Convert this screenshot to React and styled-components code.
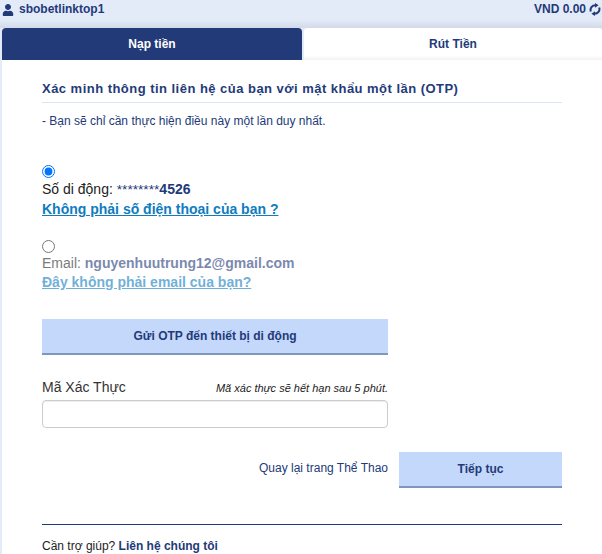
import React from 'react';
import styled, { createGlobalStyle } from 'styled-components';
import { FaUser } from 'react-icons/fa';

const GlobalStyle = createGlobalStyle`
  html, body {
    margin: 0;
    padding: 0;
    background: #e4ebf8;
    font-family: "Liberation Sans", Arial, sans-serif;
  }
`;

const Page = styled.div`
  width: 602px;
  height: 554px;
  overflow: hidden;
  background: #e4ebf8;
`;

const TopBar = styled.div`
  height: 28px;
  padding: 3px 1px 0 2px;
  box-sizing: border-box;
  display: flex;
  align-items: flex-start;
  justify-content: space-between;
  background: linear-gradient(#e4ebf8 0, #e4ebf8 20px, #d3dae7 28px);
  color: #233a79;
  font-size: 12px;
  line-height: 13px;
  font-weight: 700;
`;

const UserName = styled.div`
  display: flex;
  align-items: center;
  gap: 5px;
`;

const Balance = styled.div`
  display: flex;
  align-items: center;
  gap: 3px;
`;

const Tabs = styled.div`
  display: flex;
  padding-left: 2px;
  height: 32px;
  background: #e4ebf8;
`;

const Tab = styled.div`
  width: ${(p) => (p.$active ? '300px' : '298px')};
  display: flex;
  align-items: center;
  justify-content: center;
  border-radius: 4px 4px 0 0;
  font-size: 12px;
  font-weight: 700;
  background: ${(p) => (p.$active ? '#233a79' : 'linear-gradient(#fff 0, #fff 27px, #f3f3f3 32px)')};
  color: ${(p) => (p.$active ? '#ffffff' : '#233a79')};
  margin-left: ${(p) => (p.$active ? '0' : '2px')};
`;

const Panel = styled.div`
  margin-left: 2px;
  height: 494px;
  box-sizing: border-box;
  background: #fff;
  padding: 20px 40px 0;
  color: #233a79;
`;

const Title = styled.div`
  height: 22px;
  border-bottom: 1px solid #dbe5f6;
  font-size: 13px;
  font-weight: 700;
  line-height: 18px;
  letter-spacing: 0.47px;
`;

const Note = styled.div`
  margin-top: 10px;
  font-size: 12px;
  line-height: 16px;
`;

const Option = styled.div`
  display: flex;
  flex-direction: column;
  align-items: flex-start;
  margin-top: ${(p) => p.$top}px;
`;

const Radio = styled.input.attrs({ type: 'radio', readOnly: true })`
  width: 13px;
  height: 13px;
  margin: 0;
  accent-color: #0075ff;
`;

const ContactLine = styled.div`
  margin-top: ${(p) => (p.$dim ? '1px' : '2px')};
  font-size: 14px;
  line-height: 18px;
  color: #222;
  opacity: ${(p) => (p.$dim ? 0.6 : 1)};
`;

const Stars = styled.span`
  color: #233a79;
  font-size: 13.7px;
`;

const Strong = styled.b`
  color: #233a79;
  font-size: 14px;
`;

const NotYours = styled.a`
  margin-top: 1px;
  font-size: 14px;
  line-height: 19px;
  font-weight: 700;
  color: #0f7cc0;
  text-decoration: underline;
  opacity: ${(p) => (p.$dim ? 0.6 : 1)};
`;

const SendButton = styled.button`
  display: block;
  width: 346px;
  height: 36px;
  margin-top: 27px;
  border: 0;
  border-bottom: 2px solid #7f97bc;
  padding: 0;
  background: #c3d8fa;
  color: #233a79;
  font: 700 12px "Liberation Sans", Arial, sans-serif;
`;

const CodeHead = styled.div`
  width: 346px;
  margin-top: 22px;
  display: flex;
  justify-content: space-between;
  align-items: baseline;
`;

const CodeLabel = styled.label`
  font-size: 14px;
  line-height: 20px;
  color: #333;
`;

const Hint = styled.span`
  font-size: 11px;
  font-style: italic;
  color: #222;
`;

const CodeInput = styled.input`
  display: block;
  box-sizing: border-box;
  width: 346px;
  height: 28px;
  margin-top: 3px;
  border: 1px solid #ccc;
  border-radius: 4px;
  box-shadow: inset 0 1px 1px rgba(0, 0, 0, 0.075);
`;

const Actions = styled.div`
  display: flex;
  justify-content: flex-end;
  align-items: center;
  gap: 11px;
  margin-top: 24px;
`;

const BackLink = styled.a`
  font-size: 12px;
  color: #233a79;
  margin-top: -4px;
`;

const NextButton = styled.button`
  width: 163px;
  height: 36px;
  border: 0;
  border-bottom: 2px solid #7f97bc;
  padding: 0;
  background: #c3d8fa;
  color: #233a79;
  font: 700 12px "Liberation Sans", Arial, sans-serif;
`;

const Help = styled.div`
  margin-top: 36px;
  border-top: 1px solid #233a79;
  padding-top: 13px;
  font-size: 12px;
  line-height: 16px;
  color: #222;
`;

const HelpLink = styled.a`
  font-weight: 700;
  color: #233a79;
`;

const RefreshIcon = () => (
  <svg width="12" height="13" viewBox="0 0 12 13" fill="none" stroke="#233a79" strokeWidth="2">
    <path d="M1.8 8.5C0.8 5 3 2.2 6.5 2.2" />
    <path d="M10.2 4.5C11.2 8 9 10.8 5.5 10.8" />
    <path d="M6 0l3.6 2.3L6 4.8z" fill="#233a79" stroke="none" />
    <path d="M6 13l-3.6-2.3L6 8.2z" fill="#233a79" stroke="none" />
  </svg>
);

export default function App() {
  return (
    <Page>
      <GlobalStyle />
      <TopBar>
        <UserName>
          <FaUser size={12} />
          sbobetlinktop1
        </UserName>
        <Balance>
          VND 0.00
          <RefreshIcon />
        </Balance>
      </TopBar>
      <Tabs>
        <Tab $active>Nạp tiền</Tab>
        <Tab>Rút Tiền</Tab>
      </Tabs>
      <Panel>
        <Title>Xác minh thông tin liên hệ của bạn với mật khẩu một lần (OTP)</Title>
        <Note>- Bạn sẽ chỉ cần thực hiện điều này một lần duy nhất.</Note>
        <Option $top={36}>
          <Radio checked name="otp" />
          <ContactLine>
            Số di động: <Stars>********</Stars>
            <Strong>4526</Strong>
          </ContactLine>
          <NotYours>Không phải số điện thoại của bạn ?</NotYours>
        </Option>
        <Option $top={21}>
          <Radio name="otp" />
          <ContactLine $dim>
            Email: <Strong>nguyenhuutrung12@gmail.com</Strong>
          </ContactLine>
          <NotYours $dim>Đây không phải email của bạn?</NotYours>
        </Option>
        <SendButton>Gửi OTP đến thiết bị di động</SendButton>
        <CodeHead>
          <CodeLabel>Mã Xác Thực</CodeLabel>
          <Hint>Mã xác thực sẽ hết hạn sau 5 phút.</Hint>
        </CodeHead>
        <CodeInput />
        <Actions>
          <BackLink>Quay lại trang Thể Thao</BackLink>
          <NextButton>Tiếp tục</NextButton>
        </Actions>
        <Help>
          Cần trợ giúp? <HelpLink>Liên hệ chúng tôi</HelpLink>
        </Help>
      </Panel>
    </Page>
  );
}
